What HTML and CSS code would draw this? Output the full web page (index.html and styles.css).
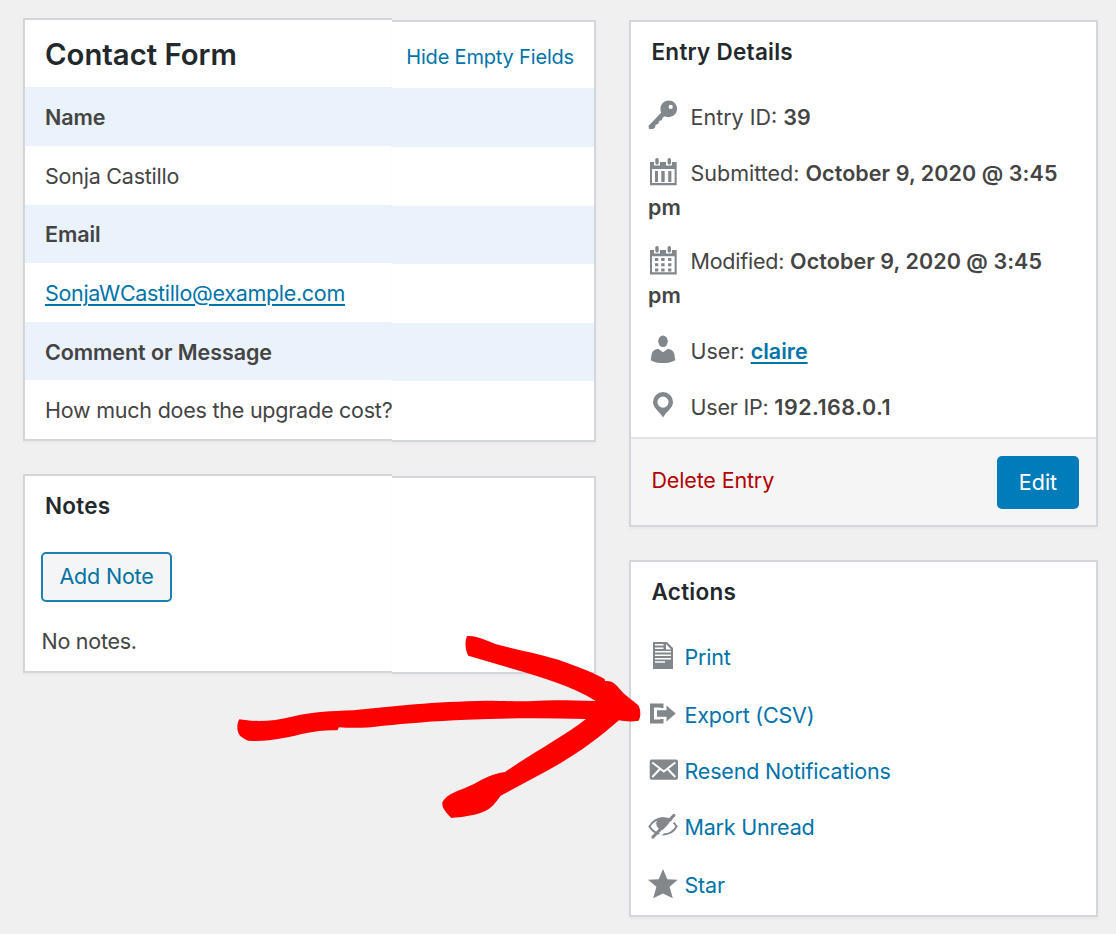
FILE: index.html
```
<!DOCTYPE html>
<html lang="en">
<head>
<meta charset="utf-8">
<title>Contact Form Entry</title>
<link rel="stylesheet" href="styles.css">
</head>
<body>
<main class="page">
  <div class="col-main">
    <section class="card split entry">
      <header class="entry-head">
        <h1 class="entry-title">Contact Form</h1>
        <a class="hide-link">Hide Empty Fields</a>
      </header>
      <div class="row band tall">Name</div>
      <div class="row">Sonja Castillo</div>
      <div class="row band email">Email</div>
      <div class="row"><a class="link mail">SonjaWCastillo@example.com</a></div>
      <div class="row band">Comment or Message</div>
      <div class="row">How much does the upgrade cost?</div>
    </section>
    <section class="card split notes">
      <h2 class="card-title notes-title">Notes</h2>
      <button class="btn-outline">Add Note</button>
      <p class="no-notes">No notes.</p>
    </section>
  </div>
  <div class="col-side">
    <section class="card details">
      <h2 class="card-title">Entry Details</h2>
      <div class="meta">
        <p class="up"><svg class="ico" viewBox="0 0 30 30"><path fill-rule="evenodd" d="M20.800 .5A8.300 8.300 0 1 1 17 16.200L14.600 17.500L13.800 20.300L11.100 21.100L10.500 23.800L7.600 24.800L7.200 27.300L5.200 29H1.200L.4 26L13.300 12.600A8.300 8.300 0 0 1 20.800 .5zM22.700 4.800a2.100 2.100 0 1 0 0 4.200a2.100 2.100 0 0 0 0-4.200z"/></svg>Entry ID: <b>39</b></p>
        <p class="submitted"><svg class="ico" viewBox="0 0 30 30"><path fill-rule="evenodd" d="M2 5h4v3.500h6V5h6v3.500h6V5h4.700v23.200H2zM4 12v14h22.600V12z"/><path d="M7 14h3v11H7zm6.300 0h3.400v11h-3.400zm6.900 0h3.200v11h-3.200z"/><rect x="7.300" y="1" width="3.400" height="6.600" rx="1.600"/><rect x="19.600" y="1" width="3.400" height="6.600" rx="1.600"/></svg>Submitted: <b>October 9, 2020 @ 3:45</b> <b class="pm">pm</b></p>
        <p class="modified"><svg class="ico" viewBox="0 0 30 30"><path fill-rule="evenodd" d="M2 5h4v3.500h6V5h6v3.500h6V5h4.700v24.500H2zM4 11.300v16h22.600v-16z"/><path d="M7 13h3.300v3H7zm6.200 0h3.400v3h-3.400zm6.900 0h3.300v3h-3.300zM7 18.200h3.300v3H7zm6.200 0h3.400v3h-3.400zm6.900 0h3.300v3h-3.300zM7 23.400h3.300v3H7zm6.200 0h3.400v3h-3.400zm6.900 0h3.300v3h-3.300z"/><rect x="7.300" y="1" width="3.400" height="6.600" rx="1.600"/><rect x="19.600" y="1" width="3.400" height="6.600" rx="1.600"/></svg><span>Modified: </span><b>October 9, 2020 @ 3:45</b> <b class="pm">pm</b></p>
        <p><svg class="ico" viewBox="0 0 30 30"><ellipse cx="15" cy="6.300" rx="4.800" ry="5.800"/><path d="M10 13.800l5 3.500 5-3.500c3.500.6 5.600 2.400 6.300 5l1 6.400C24 27.300 19.500 28 15 28S6 27.300 2.700 25.200l1-6.400c.7-2.600 2.800-4.400 6.300-5z"/></svg>User: <a class="link bold">claire</a></p>
        <p class="up ip"><svg class="ico" viewBox="0 0 30 30"><path fill-rule="evenodd" d="M15 2a10 10 0 0 1 10 10c0 5.500-5 8.500-8 12.500l-2 3-2-3C10 20.500 5 17.500 5 12A10 10 0 0 1 15 2zm0 4.500a5.600 5.600 0 1 0 0 11.200 5.600 5.600 0 0 0 0-11.200z"/></svg><span>User IP: </span><b>192.168.0.1</b></p>
      </div>
      <footer class="details-foot">
        <a class="delete">Delete Entry</a>
        <button class="btn-primary">Edit</button>
      </footer>
    </section>
    <section class="card actions">
      <h2 class="card-title">Actions</h2>
      <ul class="action-list">
        <li><svg class="ico" viewBox="0 0 30 30"><path fill-rule="evenodd" d="M5 1h14l6 6v21H5zM7 3v1.500h8.500V3zm0 3.500V8h8.500V6.500zM7 10v1.500h16V10zm0 3.500V15h16v-1.500zM7 17v1.500h16V17zm0 3.300v1.500h10v-1.500zM18 3v5.500h5.200z"/></svg><a class="act">Print</a></li>
        <li><svg class="ico" viewBox="0 0 30 30"><path d="M2 4.500h13.500V9h-3.200V8.500H6v12h6.300V20h3.200v4.500H2z"/><path d="M9 11.300h9.500V6.500l9.200 8-9.200 8v-4.800H9z"/></svg><a class="act">Export (CSV)</a></li>
        <li><svg class="ico" viewBox="0 0 30 30"><rect x="1.700" y="4.500" width="28.300" height="20.300" rx="2"/><path class="cut" d="M4.300 7.500L15.800 16.500 27.300 7.500M4.300 22l7.600-8M27.300 22l-7.600-8"/></svg><a class="act">Resend Notifications</a></li>
        <li class="unread"><svg class="ico" viewBox="0 0 30 30"><path class="pen" d="M1.400 14.500C8 3.500 22.500 3.500 28.600 14.500C22.500 25 8 25 1.400 14.500z"/><circle cx="14.500" cy="11.500" r="6.300"/><path class="cut wide" d="M28 6L7.500 28"/><path class="pen thick" d="M25.800 3.500L5 25"/></svg><a class="act">Mark Unread</a></li>
        <li><svg class="ico" viewBox="0 0 30 30"><path d="M15 0l4.300 10.300 10.500.4-8.200 7 3.200 11.500L15 24.500 5.200 29.200l3.200-11.500L0 10.700l10.700-.4z"/></svg><a class="act">Star</a></li>
      </ul>
    </section>
  </div>
  <svg class="arrow" viewBox="0 0 1290 630"><path d="M58 298C100 306 165 304 215 290C290 274 330 274 400 271C520 258 640 245 800 242C860 242 900 246 940 243C1000 238 1060 242 1127 243C1060 200 960 170 880 147L745 107C735 90 734 65 741 48C775 46 800 64 840 76C920 97 970 104 1040 128C1090 146 1120 158 1154 177L1155 183C1180 181 1190 196 1207 216C1225 234 1245 245 1257 259C1263 275 1262 290 1256 302C1235 306 1215 304 1197 301C1130 360 1060 410 980 453L842 527C825 550 815 565 790 575C760 588 725 590 694 594C680 578 665 565 667 547C680 520 720 512 762 492C790 476 820 460 855 456C935 400 1030 350 1098 297C980 294 860 294 740 299C640 303 560 310 490 317C440 324 400 325 357 322L352 331C290 328 240 345 190 354C150 362 115 365 85 362C65 355 52 345 52 322C52 312 54 305 58 298Z"/></svg>
</main>
</body>
</html>
```
FILE: styles.css
```
*, *::before, *::after { box-sizing: border-box; }
body { margin: 0; background: #f0f0f0; color: #444; font: 21.500px/34px Inter, "Liberation Sans", sans-serif; }
h1, h2, p, ul { margin: 0; padding: 0; }
ul { list-style: none; }
b, .bold { font-weight: 600; }
.page { position: relative; width: 1116px; height: 936px; display: flex; padding: 18px 18px 0 23px; gap: 33px; border-bottom: 2px solid #fff; }
.col-main { width: 573px; display: flex; flex-direction: column; gap: 33px; }
.col-side { width: 469px; padding-top: 2px; display: flex; flex-direction: column; gap: 33px; }
.card { background: #fff; border: 2px solid #d3d6da; box-shadow: 0 2px 3px rgba(0,0,0,.04); }

/* Cards in the main column step down by a pixel at the seam */
.split { position: relative; isolation: isolate; background: none; border-color: transparent; box-shadow: none; }
.split::before, .split::after { content: ""; position: absolute; z-index: -1; background: #fff; border: 2px solid #d3d6da; box-shadow: 0 2px 3px rgba(0,0,0,.03); }
.split::before { left: -2px; top: -2px; bottom: -2px; width: 369px; border-right: 0; }
.split::after { left: 367px; right: -2px; top: -.5px; bottom: -3px; border-left: 0; }

.entry { height: 423px; }
.entry-head { height: 66.500px; display: flex; justify-content: space-between; padding: 0 20px; }
.entry-title { font-size: 29.300px; font-weight: 600; line-height: 70px; color: #23282d; }
.hide-link { font-size: 20px; line-height: 74px; letter-spacing: -.18px; color: #0073aa; }
.row { position: relative; padding-left: 20px; height: 59px; line-height: 61px; letter-spacing: -.23px; }
.band { height: 58px; font-weight: 600; letter-spacing: -.07px; background: linear-gradient(#eaf2fb, #eaf2fb) 0 0 / 367px 100% no-repeat; }
.band::after { content: ""; position: absolute; left: 367px; right: 0; top: 1px; height: 100%; background: #eaf2fb; }
.band.tall { height: 59.500px; line-height: 60px; }
.band.email { line-height: 59px; }
.link { color: #0073aa; text-decoration: underline; text-decoration-thickness: 1.500px; text-underline-offset: 3px; }
.mail { letter-spacing: -.31px; }

.notes { height: 199px; }
.card-title { font-size: 22.500px; font-weight: 600; line-height: 59px; height: 60px; padding-left: 20.500px; letter-spacing: .25px; color: #23282d; }
.notes-title { padding-left: 20px; }
button { font: inherit; padding: 0; display: block; }
.btn-outline { width: 131px; height: 50px; margin: 16px 0 0 16px; border: 2px solid #1d80b0; border-radius: 5px; background: #f3f5f6; color: #0071a1; line-height: 44px; padding-bottom: 2px; letter-spacing: -.2px; }
.no-notes { padding: 22px 0 0 16.500px; letter-spacing: -.26px; }

.details { height: 507px; display: flex; flex-direction: column; }
.meta { padding: 18px 17px 0 17px; flex: 1; }
.meta p { margin-bottom: 22px; }
.meta .submitted { margin-bottom: 20px; }
.meta p:last-child { margin-bottom: 0; }
.submitted b { letter-spacing: .07px; }
.modified span, .ip span { letter-spacing: -.22px; }
.modified b { letter-spacing: .07px; }
.ip b { letter-spacing: .5px; }
.ico { width: 30px; height: 30px; fill: #82878c; vertical-align: -6px; overflow: visible; }
.up .ico { vertical-align: -5px; }
.meta .ico { margin-right: 12.500px; }
.details-foot { height: 88px; border-top: 2px solid #e2e2e2; background: #f5f5f5; display: flex; justify-content: space-between; padding: 16px 17px 0 20.500px; }
.delete { color: #b20000; line-height: 50px; letter-spacing: -.15px; }
.btn-primary { width: 82px; height: 53px; margin-top: 1px; border: 0; border-radius: 5px; background: #007cba; color: #fff; line-height: 50px; padding-bottom: 2px; }

.actions { height: 357px; }
.action-list { padding: 18px 0 0 17px; }
.action-list li { height: 57.500px; display: flex; gap: 6.500px; }
.action-list li:nth-child(2), .action-list li:nth-child(3) { height: 56.400px; }
.action-list .ico { margin-top: 1px; }
.action-list .unread .ico { margin-top: 2px; }
.act { color: #0073aa; letter-spacing: -.2px; }
.cut { fill: none; stroke: #fff; stroke-width: 2; }
.wide { stroke-width: 3; }
.pen { fill: none; stroke: #82878c; stroke-width: 2; }
.thick { stroke-width: 3.200; stroke-linecap: round; }
.arrow { position: absolute; left: 220px; top: 620px; width: 430px; height: 210px; fill: #f00; }
```
